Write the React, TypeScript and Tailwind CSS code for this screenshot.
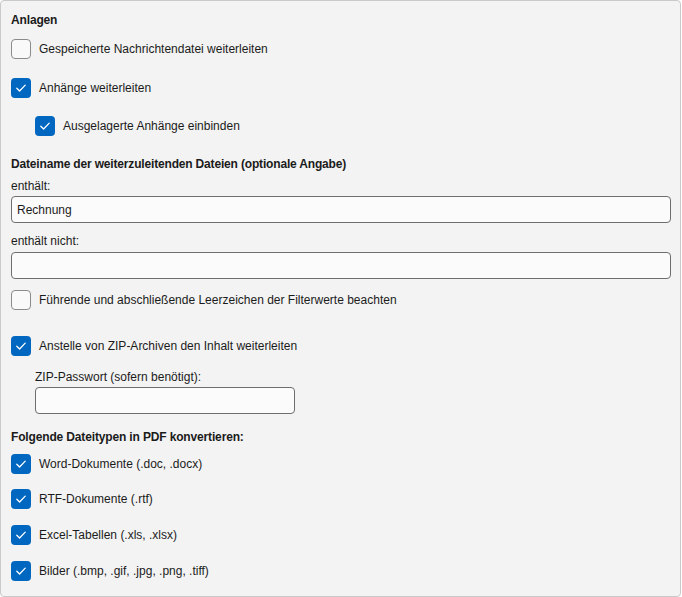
import React from "react";

function Check({ checked }: { checked: boolean }) {
  if (!checked) {
    return <span className="block h-5 w-5 shrink-0 rounded-[4px] border border-[#8b8b8b] bg-[#f9f9f9]" />;
  }
  return (
    <span className="flex h-5 w-5 shrink-0 items-center justify-center rounded-[4px] bg-[#0067c0]">
      <svg width="12" height="12" viewBox="0 0 12 12" fill="none">
        <path d="M1.8 6.3 L4.6 9 L10.2 3.1" stroke="#fff" strokeWidth="1.3" strokeLinecap="round" strokeLinejoin="round" />
      </svg>
    </span>
  );
}

function Option({ label, checked, className = "" }: { label: string; checked: boolean; className?: string }) {
  return (
    <label className={`flex h-5 items-center gap-2 ${className}`}>
      <Check checked={checked} />
      <span className="leading-[18px]">{label}</span>
    </label>
  );
}

function Field({ value = "", className = "" }: { value?: string; className?: string }) {
  return (
    <input
      readOnly
      value={value}
      className={`h-[27px] rounded-[4px] border border-[#6e6e6e] bg-[#fbfbfb] px-[5px] text-[12px] text-[#1b1b1b] outline-none ${className}`}
    />
  );
}

export default function App() {
  return (
    <div className="h-[597px] w-[682px] bg-white">
      <div
        className="flex h-[597px] w-[681px] flex-col rounded-[4px] border border-[#c9c9c9] bg-[#f3f3f3] px-[10px] pt-[10px] text-[12px] text-[#1b1b1b]"
        style={{ fontFamily: '"Liberation Sans", Arial, sans-serif' }}
      >
        <h2 className="font-bold leading-[18px] tracking-[-0.15px]">Anlagen</h2>
        <Option className="mt-[10px]" checked={false} label="Gespeicherte Nachrichtendatei weiterleiten" />
        <Option className="mt-[19px]" checked label="Anhänge weiterleiten" />
        <Option className="ml-6 mt-[18px]" checked label="Ausgelagerte Anhänge einbinden" />

        <h2 className="mt-[19px] font-bold leading-[18px] tracking-[-0.17px]">
          Dateiname der weiterzuleitenden Dateien (optionale Angabe)
        </h2>
        <p className="mt-[4px] leading-[18px]">enthält:</p>
        <Field className="mt-[1px] w-[660px]" value="Rechnung" />
        <p className="mt-[9px] leading-[18px]">enthält nicht:</p>
        <Field className="mt-[2px] w-[660px]" />
        <Option className="mt-[11px]" checked={false} label="Führende und abschließende Leerzeichen der Filterwerte beachten" />

        <Option className="mt-[26px]" checked label="Anstelle von ZIP-Archiven den Inhalt weiterleiten" />
        <p className="ml-6 mt-[12px] leading-[18px]">ZIP-Passwort (sofern benötigt):</p>
        <Field className="ml-6 mt-[1px] w-[260px]" />

        <h2 className="mt-[14px] font-bold leading-[18px] tracking-[-0.15px]">Folgende Dateitypen in PDF konvertieren:</h2>
        <Option className="mt-[8px]" checked label="Word-Dokumente (.doc, .docx)" />
        <Option className="mt-[15px]" checked label="RTF-Dokumente (.rtf)" />
        <Option className="mt-[16px]" checked label="Excel-Tabellen (.xls, .xlsx)" />
        <Option className="mt-[16px]" checked label="Bilder (.bmp, .gif, .jpg, .png, .tiff)" />
      </div>
    </div>
  );
}
